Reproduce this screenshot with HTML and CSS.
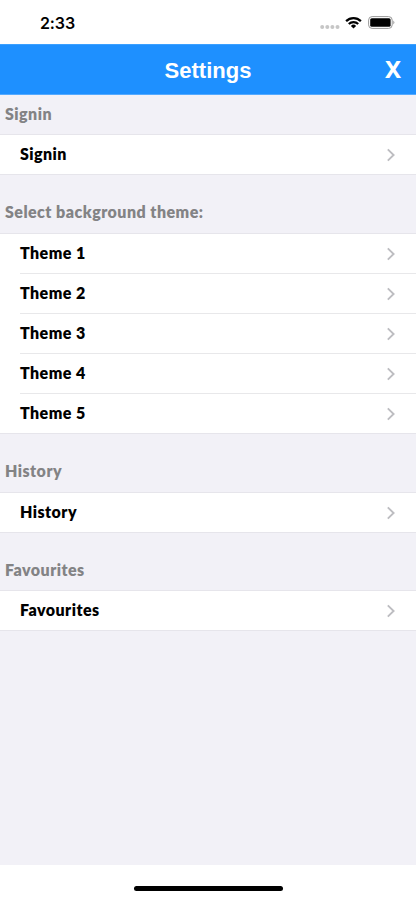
FILE: index.html
```
<!DOCTYPE html>
<html lang="en">
<head>
<meta charset="utf-8">
<title>Settings</title>
<link rel="stylesheet" href="styles.css">
</head>
<body>
<svg class="defs" width="0" height="0" aria-hidden="true"><symbol id="chevron" viewBox="0 0 10 14"><path d="M1.8 1.4 7.6 7 1.8 12.6" fill="none" stroke="#bdbdc1" stroke-width="1.9"/></symbol></svg>
<div class="screen">
  <div class="status">
    <span class="time">2:33</span>
    <div class="indicators">
      <svg class="dots" width="20" height="6" viewBox="0 0 20 6" fill="#c6c6c6"><circle cx="2.2" cy="3" r="2"/><circle cx="7.3" cy="3" r="2"/><circle cx="12.4" cy="3" r="2"/><circle cx="17.5" cy="3" r="2"/></svg>
      <svg class="wifi" width="17" height="13" viewBox="0 0 17 13" fill="none" stroke="#000" stroke-width="2.2"><path d="M1.1 5.1a10.5 10.5 0 0 1 14.8 0M3.8 8a6.7 6.7 0 0 1 9.4 0"/><path d="M8.5 12.5 5.9 9.9a3.7 3.7 0 0 1 5.2 0Z" fill="#000" stroke="none"/></svg>
      <svg class="battery" width="27" height="13" viewBox="0 0 27 13"><rect x=".6" y=".6" width="23.6" height="11.8" rx="3.5" fill="none" stroke="#999" stroke-width="1"/><rect x="2.2" y="2.2" width="20.4" height="8.6" rx="1.6" fill="#000"/><path d="M25.3 4.5q2.2 2 0 4Z" fill="#999"/></svg>
    </div>
  </div>
  <header class="navbar"><h1>Settings</h1><button class="close">X</button></header>
  <main class="content">
    <h2 class="label first">Signin</h2>
    <div class="group"><div class="row"><span>Signin</span><svg class="chevron"><use href="#chevron"/></svg></div></div>
    <h2 class="label">Select background theme:</h2>
    <div class="group">
      <div class="row"><span>Theme 1</span><svg class="chevron"><use href="#chevron"/></svg></div>
      <div class="row"><span>Theme 2</span><svg class="chevron"><use href="#chevron"/></svg></div>
      <div class="row"><span>Theme 3</span><svg class="chevron"><use href="#chevron"/></svg></div>
      <div class="row"><span>Theme 4</span><svg class="chevron"><use href="#chevron"/></svg></div>
      <div class="row"><span>Theme 5</span><svg class="chevron"><use href="#chevron"/></svg></div>
    </div>
    <h2 class="label">History</h2>
    <div class="group"><div class="row"><span>History</span><svg class="chevron"><use href="#chevron"/></svg></div></div>
    <h2 class="label last">Favourites</h2>
    <div class="group"><div class="row"><span>Favourites</span><svg class="chevron"><use href="#chevron"/></svg></div></div>
  </main>
  <footer class="home"><div class="bar"></div></footer>
</div>
</body>
</html>
```
FILE: styles.css
```
* { box-sizing: border-box; }
body { margin: 0; background: #fff; }
.defs { display: block; }
.screen { width: 416px; height: 900px; display: flex; flex-direction: column; overflow: hidden; }
.status { height: 44px; display: flex; justify-content: space-between; padding: 0 22px 0 40px; }
.time { font: 600 16px/20px Inter, sans-serif; margin-top: 13px; letter-spacing: -0.1px; }
.indicators { display: flex; align-items: flex-start; }
.dots { margin-top: 24px; }
.wifi { margin: 16px 6px 0 5px; }
.battery { margin-top: 16px; margin-right: -1px; }
.navbar { height: 51px; background: #1e90ff; color: #fff; display: grid; grid-template-columns: 60px 1fr 60px; align-items: center; border-top: 1px solid #3ba0ff; border-bottom: 1px solid #55aaff; }
.navbar h1 { grid-column: 2; margin: 3px 0 0; text-align: center; font: 700 22px/26px "Liberation Sans", sans-serif; }
.close { border: 0; background: none; color: #fff; padding: 0 15px 2px 0; text-align: right; font: 700 24px/28px "Noto Sans", sans-serif; }
.content { flex: 1; background: #f2f1f7; }
.label { margin: 0; height: 58px; padding: 27px 0 0 5px; color: #838385; font: 800 16px/20px Lato, sans-serif; letter-spacing: 0.46px; }
.label.first { height: 39px; padding-top: 9px; }
.label.last { height: 57px; }
.group { background: #fff; border-bottom: 1px solid #e6e5eb; border-top: 1px solid #e6e5eb; }
.row { height: 39px; display: flex; align-items: center; justify-content: space-between; margin-left: 20px; padding-right: 20px; font: 800 16px/20px Lato, sans-serif; letter-spacing: 0.45px; color: #000; }
.row span { padding-bottom: 1px; }
.row + .row { height: 40px; border-top: 1px solid #e8e8ea; }
.chevron { width: 10px; height: 14px; }
.home { height: 35px; display: flex; justify-content: center; padding-top: 21px; }
.bar { width: 149px; height: 5px; border-radius: 3px; background: #000; }
```
